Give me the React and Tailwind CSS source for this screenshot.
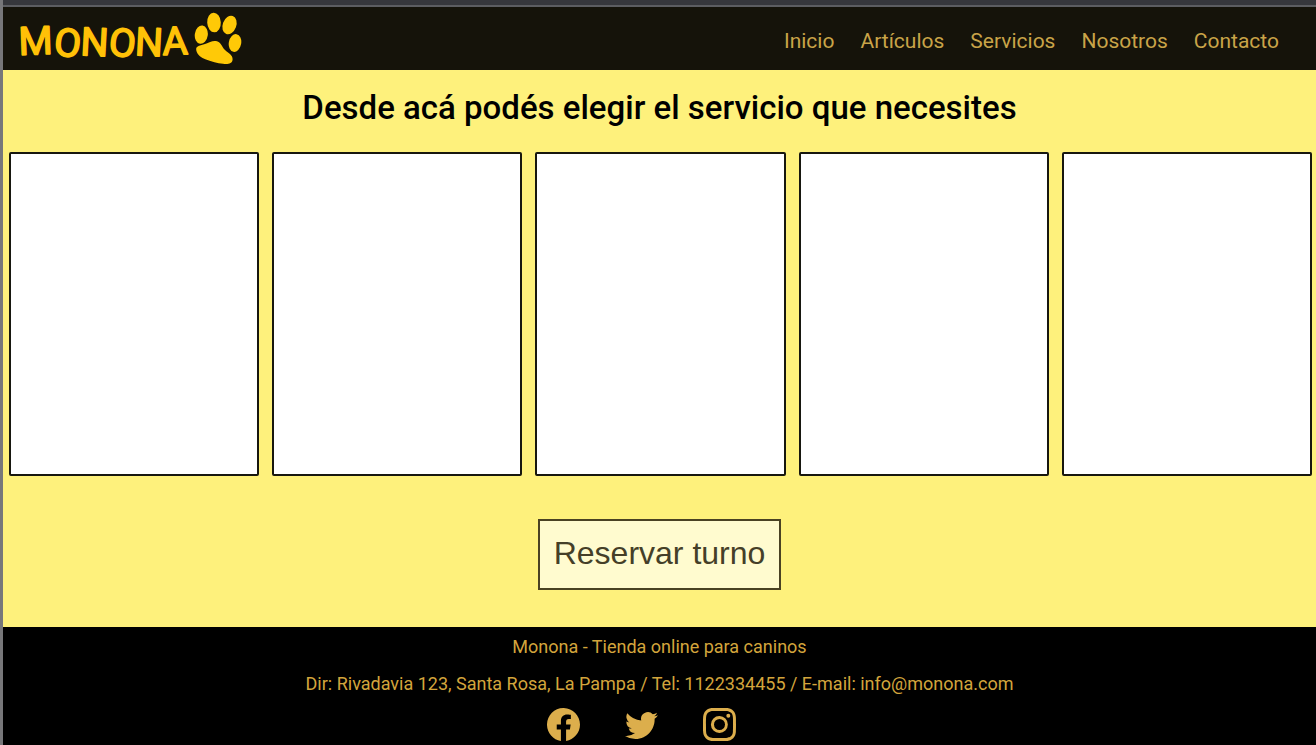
import React from "react";
import { BsFacebook, BsTwitter, BsInstagram } from "react-icons/bs";

const links = ["Inicio", "Artículos", "Servicios", "Nosotros", "Contacto"];
const services = ["Servicio 1", "Servicio 2", "Servicio 3", "Servicio 4", "Servicio 5"];
const social = [
  { label: "Facebook", Icon: BsFacebook },
  { label: "Twitter", Icon: BsTwitter },
  { label: "Instagram", Icon: BsInstagram },
];

function Wordmark() {
  return (
    <svg viewBox="0 0 174 62" className="h-[62px] w-[174px] overflow-visible" aria-hidden="true">
      <text
        x="2"
        y="47"
        rotate="-2 6 3 6 3 -2"
        fontSize="39"
        fill="#ffc107"
        stroke="#ffc107"
        strokeWidth="1.6"
        strokeLinejoin="round"
      >
        MONONA
      </text>
    </svg>
  );
}

function Paw() {
  return (
    <svg viewBox="0 0 48 54" className="h-[54px] w-12" fill="#ffc907" aria-hidden="true">
      <ellipse cx="20" cy="10.5" rx="6.8" ry="9.8" transform="rotate(-3 20 10.5)" />
      <ellipse cx="35.5" cy="13" rx="6.8" ry="9.6" transform="rotate(20 35.5 13)" />
      <ellipse cx="7.3" cy="22.7" rx="6.5" ry="9.2" transform="rotate(8 7.3 22.7)" />
      <ellipse cx="41" cy="31" rx="6.2" ry="9" transform="rotate(10 41 31)" />
      <path d="M2.3 38.5C1.2 33.5 6.5 33.5 11 32C15.500 30.500 18 28.500 22 29C27 29.600 27.500 34.500 31 38C34.500 41.300 39 43 38.600 47.500C38.300 52 33.500 52.500 29 51.800C23 51.500 18 49.500 12 47.500C7 45.500 3.300 43 2.300 38.500Z" />
    </svg>
  );
}

export default function App() {
  return (
    <div className="flex min-h-screen flex-col border-l-[3px] border-[#77777a] bg-[#fef17c] font-['Roboto','Liberation_Sans',sans-serif]">
      <div className="h-[7px] border-b-2 border-[#5c5d61] bg-[#36373c]" />
      <header className="flex h-[63px] items-center justify-between bg-[#15130a] pr-[37px] pl-3.5">
        <a href="#inicio" aria-label="Monona" className="flex items-center gap-[3px]">
          <Wordmark />
          <Paw />
        </a>
        <nav className="flex gap-[26px] pt-1 text-[21px] leading-7 text-[#c9a448]">
          {links.map((l) => (
            <a key={l} href={"#" + l.toLowerCase()}>{l}</a>
          ))}
        </nav>
      </header>

      <main className="flex flex-1 flex-col items-center">
        <h1 className="mt-[18px] text-[33px] leading-10 font-medium text-black">
          Desde acá podés elegir el servicio que necesites
        </h1>
        <ul className="mt-6 grid w-full grid-cols-5 gap-[13px] pr-1 pl-1.5">
          {services.map((s) => (
            <li key={s} className="h-[324px] rounded-xs border-2 border-[#17170f] bg-white" />
          ))}
        </ul>
        <button
          type="button"
          className="mt-[43px] mb-9 h-[71px] border-2 border-[#4a4223] bg-[#fffbcf] px-[14px] pb-1 font-['Liberation_Sans',Arial,sans-serif] text-[32px] leading-9 text-[#453f28]"
        >
          Reservar turno
        </button>
      </main>

      <footer className="flex flex-col items-center bg-black pb-1 text-center text-lg leading-6 text-[#d3a53c]">
        <p className="mt-2">Monona - Tienda online para caninos</p>
        <p className="mt-[13px]">
          Dir: Rivadavia 123, Santa Rosa, La Pampa / Tel: 1122334455 / E-mail: info@monona.com
        </p>
        <div className="mt-3 flex gap-[45px] pr-9 text-[#dcae4c]">
          {social.map(({ label, Icon }) => (
            <a key={label} href={"#" + label.toLowerCase()} aria-label={label}>
              <Icon className="size-[33px]" />
            </a>
          ))}
        </div>
      </footer>
    </div>
  );
}
